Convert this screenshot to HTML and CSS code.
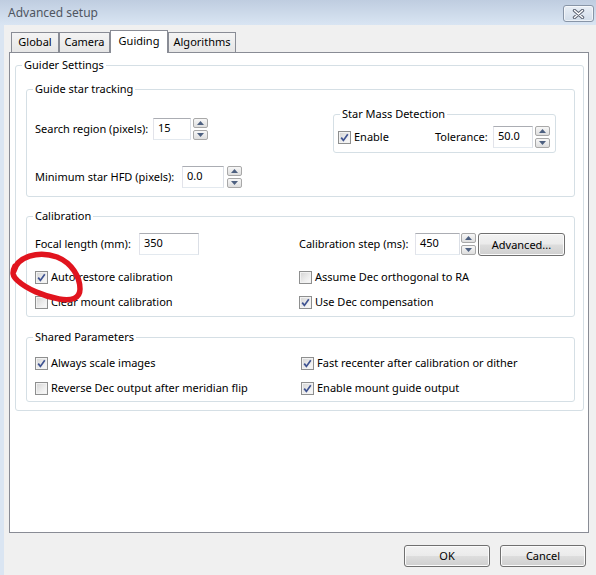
FILE: index.html
```html
<!DOCTYPE html>
<html>
<head>
<meta charset="utf-8">
<title>Advanced setup</title>
<link rel="stylesheet" href="styles.css">
</head>
<body>
<div class="window">
  <div class="titlebar">
    <span class="title">Advanced setup</span>
    <span class="close">
      <svg width="13" height="10" viewBox="0 0 13 10"><path d="M2.5 1.5 L10.5 8.5 M10.5 1.5 L2.5 8.5" stroke="#5b6373" stroke-width="3.4" stroke-linecap="round" fill="none"/><path d="M2.5 1.5 L10.5 8.5 M10.5 1.5 L2.5 8.5" stroke="#ffffff" stroke-width="1.4" stroke-linecap="round" fill="none"/></svg>
    </span>
  </div>
  <div class="main">
    <div class="client">
      <div class="tabs">
        <div class="tab t-global">Global</div>
        <div class="tab t-camera">Camera</div>
        <div class="tab active t-guiding">Guiding</div>
        <div class="tab t-algo">Algorithms</div>
      </div>
      <div class="panel">
        <div class="group">
          <div class="gtitle">Guider Settings</div>
          <div class="gbody guider-body">

            <div class="group">
              <div class="gtitle">Guide star tracking</div>
              <div class="gbody track-body">
                <div class="track-left">
                  <div class="field">
                    <span class="lbl w-search">Search region (pixels):</span>
                    <span class="in in-search">15</span>
                    <span class="spin m2"><span><svg width="7" height="4" viewBox="0 0 7 4"><path d="M0 4 L3.5 0 L7 4Z" fill="#4d6080"/></svg></span><span><svg width="7" height="4" viewBox="0 0 7 4"><path d="M0 0 L3.5 4 L7 0Z" fill="#4d6080"/></svg></span></span>
                  </div>
                  <div class="field f-hfd">
                    <span class="lbl w-hfd">Minimum star HFD (pixels):</span>
                    <span class="in in-hfd">0.0</span>
                    <span class="spin m3"><span><svg width="7" height="4" viewBox="0 0 7 4"><path d="M0 4 L3.5 0 L7 4Z" fill="#4d6080"/></svg></span><span><svg width="7" height="4" viewBox="0 0 7 4"><path d="M0 0 L3.5 4 L7 0Z" fill="#4d6080"/></svg></span></span>
                  </div>
                </div>
                <div class="group mass">
                  <div class="gtitle">Star Mass Detection</div>
                  <div class="gbody mass-body">
                    <span class="chk w-enable"><span class="cb"><svg width="11" height="11" viewBox="0 0 11 11"><path d="M2.2 5.6 L4.4 8.4 L8.8 2.2" stroke="#3f5391" stroke-width="1.7" fill="none"/></svg></span><span class="ctext">Enable</span></span>
                    <span class="lbl w-tol">Tolerance:</span>
                    <span class="in in-tol">50.0</span>
                    <span class="spin m2"><span><svg width="7" height="4" viewBox="0 0 7 4"><path d="M0 4 L3.5 0 L7 4Z" fill="#4d6080"/></svg></span><span><svg width="7" height="4" viewBox="0 0 7 4"><path d="M0 0 L3.5 4 L7 0Z" fill="#4d6080"/></svg></span></span>
                  </div>
                </div>
              </div>
            </div>

            <div class="group cal">
              <div class="gtitle">Calibration</div>
              <div class="gbody cal-body">
                <div class="crow crow-1 cols-cal">
                  <div class="field">
                    <span class="lbl w-focal">Focal length (mm):</span>
                    <span class="in in-focal">350</span>
                  </div>
                  <div class="field">
                    <span class="lbl w-step">Calibration step (ms):</span>
                    <span class="in in-step">450</span>
                    <span class="spin m1"><span><svg width="7" height="4" viewBox="0 0 7 4"><path d="M0 4 L3.5 0 L7 4Z" fill="#4d6080"/></svg></span><span><svg width="7" height="4" viewBox="0 0 7 4"><path d="M0 0 L3.5 4 L7 0Z" fill="#4d6080"/></svg></span></span>
                    <span class="btn btn-adv">Advanced...</span>
                  </div>
                </div>
                <div class="crow crow-2 cols-cal">
                  <span class="chk"><span class="cb"><svg width="11" height="11" viewBox="0 0 11 11"><path d="M2.2 5.6 L4.4 8.4 L8.8 2.2" stroke="#3f5391" stroke-width="1.7" fill="none"/></svg></span><span class="ctext">Auto restore calibration</span></span>
                  <span class="chk"><span class="cb"></span><span class="ctext">Assume Dec orthogonal to RA</span></span>
                </div>
                <div class="crow crow-3 cols-cal">
                  <span class="chk"><span class="cb"></span><span class="ctext">Clear mount calibration</span></span>
                  <span class="chk"><span class="cb"><svg width="11" height="11" viewBox="0 0 11 11"><path d="M2.2 5.6 L4.4 8.4 L8.8 2.2" stroke="#3f5391" stroke-width="1.7" fill="none"/></svg></span><span class="ctext">Use Dec compensation</span></span>
                </div>
              </div>
            </div>

            <div class="group shared">
              <div class="gtitle">Shared Parameters</div>
              <div class="gbody shared-body">
                <div class="crow cols-shared">
                  <span class="chk"><span class="cb"><svg width="11" height="11" viewBox="0 0 11 11"><path d="M2.2 5.6 L4.4 8.4 L8.8 2.2" stroke="#3f5391" stroke-width="1.7" fill="none"/></svg></span><span class="ctext">Always scale images</span></span>
                  <span class="chk"><span class="cb"><svg width="11" height="11" viewBox="0 0 11 11"><path d="M2.2 5.6 L4.4 8.4 L8.8 2.2" stroke="#3f5391" stroke-width="1.7" fill="none"/></svg></span><span class="ctext">Fast recenter after calibration or dither</span></span>
                </div>
                <div class="crow crow-s2 cols-shared">
                  <span class="chk"><span class="cb"></span><span class="ctext">Reverse Dec output after meridian flip</span></span>
                  <span class="chk"><span class="cb"><svg width="11" height="11" viewBox="0 0 11 11"><path d="M2.2 5.6 L4.4 8.4 L8.8 2.2" stroke="#3f5391" stroke-width="1.7" fill="none"/></svg></span><span class="ctext">Enable mount guide output</span></span>
                </div>
              </div>
            </div>

          </div>
        </div>
      </div>
      <div class="footer">
        <span class="btn btn-dlg">OK</span>
        <span class="btn btn-dlg">Cancel</span>
      </div>
    </div>
  </div>
  <svg class="annot" width="596" height="575" viewBox="0 0 596 575">
    <path d="M14 271 C 17 257, 38 250, 57 257 C 72 263, 80 277, 80 289 C 80 299, 71 301, 59 299 C 43 296, 27 289, 18 281 C 12 276, 12 272, 15 266" stroke="#e1141e" stroke-width="5.5" fill="none" stroke-linecap="round" stroke-linejoin="round"/>
  </svg>
</div>
</body>
</html>
```

FILE: styles.css
```css
* { box-sizing: border-box; }
html, body { margin: 0; padding: 0; }
body {
  width: 596px;
  height: 575px;
  overflow: hidden;
  font-family: "Noto Sans", "Open Sans", sans-serif;
  font-size: 11px;
  color: #000;
  background: #f0f0f0;
}
.window {
  position: relative;
  width: 596px;
  height: 575px;
  display: flex;
  flex-direction: column;
  overflow: hidden;
}
.titlebar {
  height: 25px;
  flex: none;
  display: flex;
  align-items: flex-start;
  background: linear-gradient(#bfcde0, #d9e5f3);
}
.title {
  padding: 4px 0 0 8px;
  font-size: 12px;
  line-height: 17px;
  color: #4f5661;
}
.close {
  margin: 5px 2px 0 auto;
  width: 31px;
  height: 17px;
  border: 1px solid #8895a7;
  border-radius: 3px;
  background: linear-gradient(#e9eff6, #d2ddea);
  box-shadow: inset 0 0 0 1px rgba(255,255,255,0.6);
  display: flex;
  align-items: center;
  justify-content: center;
}
.close svg { display: block; }
.main {
  flex: 1;
  display: flex;
  border-left: 4px solid #dae5f2;
}
.client {
  flex: 1;
  padding: 5px 7px 0 5px;
  background: #f0f0f0;
}
.tabs {
  display: flex;
  align-items: flex-end;
  height: 22px;
  padding-left: 2px;
}
.tab {
  height: 20px;
  line-height: 18px;
  text-align: center;
  border: 1px solid #898c95;
  border-bottom: none;
  background: linear-gradient(#f4f4f4, #e6e6e6);
}
.tab.active {
  position: relative;
  z-index: 1;
  height: 23px;
  line-height: 19px;
  margin-bottom: -1px;
  background: #fff;
}
.t-global { width: 48px; }
.t-camera { width: 51px; }
.t-guiding { width: 58px; }
.t-algo { width: 68px; }

.panel {
  height: 481px;
  border: 1px solid #898c95;
  background: #fff;
  padding: 12px 4px 0 5px;
}
.group {
  border: 1px solid #d5dfe5;
  border-radius: 3px;
  background: #fff;
}
.gtitle {
  height: 16px;
  line-height: 15px;
  margin-top: -9px;
  margin-left: 6px;
  padding: 0 2px;
  width: fit-content;
  background: #fff;
  white-space: nowrap;
}
.guider-body { padding: 16px 8px 8px 10px; }

.track-body {
  display: flex;
  align-items: flex-start;
  padding: 0 18px 0 8px;
}
.track-left {
  flex: 1;
  padding: 21px 0 8px 0;
}
.field {
  display: flex;
  align-items: center;
  height: 22px;
}
.f-hfd { margin-top: 26px; }
.lbl { flex: none; white-space: nowrap; padding-bottom: 2px; }
.w-search { width: 118px; }
.w-hfd { width: 147px; }
.w-focal { width: 104px; }
.w-step { width: 116px; }
.w-tol { width: 58px; }

.in {
  flex: none;
  height: 22px;
  line-height: 18px;
  padding: 0 4px 2px 4px;
  border: 1px solid;
  border-color: #abadb3 #dbdfe6 #e3e9ef #e2e3ea;
  background: #fff;
  white-space: nowrap;
}
.in-search { width: 38px; }
.in-hfd { width: 42px; }
.in-tol { width: 40px; }
.in-focal { width: 60px; }
.in-step { width: 45px; }

.spin {
  flex: none;
  width: 15px;
  height: 22px;
  display: flex;
  flex-direction: column;
  justify-content: space-between;
}
.spin > span {
  height: 10px;
  border: 1px solid #a8a8a8;
  border-radius: 2px;
  background: linear-gradient(#f7f7f7, #dedede);
  display: flex;
  align-items: center;
  justify-content: center;
}
.spin svg { display: block; }
.m1 { margin-left: 1px; }
.m2 { margin-left: 2px; }
.m3 { margin-left: 3px; }

.mass {
  flex: none;
  width: 223px;
  margin-top: 17px;
}
.mass-body {
  display: flex;
  align-items: center;
  padding: 4px 4px 4px 4px;
}
.w-enable { width: 97px; }

.chk {
  display: flex;
  align-items: center;
  height: 16px;
  white-space: nowrap;
}
.cb {
  flex: none;
  width: 13px;
  height: 13px;
  border: 1px solid #8e8f8f;
  background: linear-gradient(135deg, #d3d3d3 0%, #eeeeee 60%, #fbfbfb 100%);
  box-shadow: inset 0 0 0 1px #f2f2f2;
  display: flex;
  align-items: center;
  justify-content: center;
}
.cb svg { display: block; }
.ctext { margin-left: 3px; padding-bottom: 2px; }

.cal { margin-top: 19px; }
.cal-body { padding: 9px 8px 6px 8px; }
.crow { display: grid; align-items: center; }
.cols-cal { grid-template-columns: 264px auto; }
.cols-shared { grid-template-columns: 266px auto; }
.crow-1 { height: 24px; align-items: start; }
.crow-2 { margin-top: 12px; }
.crow-3 { margin-top: 9px; }

.btn {
  flex: none;
  display: flex;
  align-items: center;
  justify-content: center;
  padding-bottom: 1px;
  border: 1px solid #707070;
  border-radius: 3px;
  background: linear-gradient(#f2f2f2 0%, #ebebeb 48%, #dddddd 52%, #cfcfcf 100%);
  box-shadow: inset 0 0 0 1px #fbfbfb;
  white-space: nowrap;
}
.btn-adv {
  width: 87px;
  height: 23px;
  margin-left: 2px;
  margin-top: 1px;
}

.shared { margin-top: 20px; }
.shared-body { padding: 10px 8px 5px 8px; }
.crow-s2 { margin-top: 9px; }

.footer {
  display: flex;
  justify-content: flex-end;
  gap: 10px;
  margin-top: 12px;
  padding-right: 3px;
}
.btn-dlg {
  width: 86px;
  height: 22px;
}

.annot {
  position: absolute;
  left: 0;
  top: 0;
  pointer-events: none;
}
```
